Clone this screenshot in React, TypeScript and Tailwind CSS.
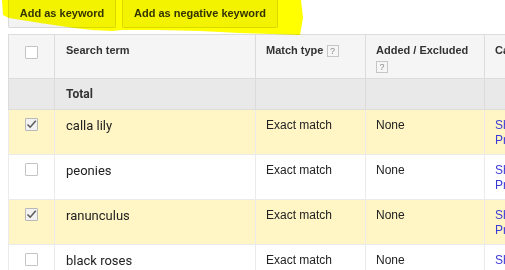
import React from 'react';

const rows = [
  { term: 'calla lily', checked: true },
  { term: 'peonies', checked: false },
  { term: 'ranunculus', checked: true },
  { term: 'black roses', checked: false },
];

const Help = () => (
  <span className="inline-flex items-center justify-center w-[12px] h-[12px] border border-[#c6c6c6] bg-[#f6f6f6] text-[9px] leading-none text-[#8a8a8a] font-normal align-middle">?</span>
);

const Box = ({ checked }: { checked: boolean }) => (
  <span className={`block w-[13px] h-[13px] rounded-[1px] border ${checked ? 'border-[#b8b8b8] bg-[#f2f2f2]' : 'border-[#c4c4c4] bg-white'}`}>
    {checked && (
      <svg viewBox="0 0 13 13" className="w-[13px] h-[13px] -mt-px -ml-px">
        <path d="M2.5 6.5 L5.2 9.2 L10.8 2.8" fill="none" stroke="#5c5c5c" strokeWidth="1.6" />
      </svg>
    )}
  </span>
);

export default function App() {
  return (
    <div className="relative w-[505px] h-[270px] overflow-hidden bg-white font-['Liberation_Sans',Arial,sans-serif]">
      {/* toolbar */}
      <div className="flex gap-[6px] pl-[8px]">
        <button className="h-[28px] w-[108px] border border-t-0 border-[#d9d9d9] bg-[#f3f3f3] rounded-b-[2px] text-[11px] font-bold text-[#333]">Add as keyword</button>
        <button className="h-[28px] w-[156px] border border-t-0 border-[#d9d9d9] bg-[#f3f3f3] rounded-b-[2px] text-[11px] font-bold text-[#333]">Add as negative keyword</button>
      </div>

      {/* highlighter stroke */}
      <svg className="absolute left-0 top-0 mix-blend-multiply pointer-events-none" width="310" height="40">
        <path
          d="M2 0 L301 0 L303 18 L300 35 L272 34 L240 33 L200 31 L160 30 L122 30 L112 31 L92 30 L74 28 L40 23 L9 18 L3 15 Z"
          fill="#ffff00"
        />
      </svg>

      {/* table */}
      <div className="mt-[6px] ml-[8px] overflow-hidden">
        <table className="border-collapse table-fixed w-[600px] text-[12px] text-[#222]">
          <colgroup>
            <col className="w-[46px]" />
            <col className="w-[201px]" />
            <col className="w-[110px]" />
            <col className="w-[119px]" />
            <col className="w-[124px]" />
          </colgroup>
          <thead>
            <tr className="h-[44px] bg-[#f5f5f5] align-top text-[11px] font-bold text-[#333] leading-[14px]">
              <th className="border border-[#dcdcdc] pt-[11px]">
                <div className="flex justify-center"><Box checked={false} /></div>
              </th>
              <th className="border border-[#dcdcdc] pt-[8px] pl-[11px] text-left">Search term</th>
              <th className="border border-[#dcdcdc] pt-[8px] pl-[10px] text-left">
                Match type <Help />
              </th>
              <th className="border border-[#dcdcdc] pt-[8px] pl-[10px] text-left">
                Added / Excluded
                <div className="mt-[2px]"><Help /></div>
              </th>
              <th className="border border-[#dcdcdc] pt-[8px] pl-[10px] text-left whitespace-nowrap overflow-hidden">Campaign</th>
            </tr>
          </thead>
          <tbody>
            <tr className="h-[31px] bg-[#e9e9e9] font-['Roboto',sans-serif] font-bold text-[12px] text-[#333]">
              <td className="border border-[#dcdcdc]" />
              <td className="border border-[#dcdcdc] pl-[11px]">Total</td>
              <td className="border border-[#dcdcdc]" />
              <td className="border border-[#dcdcdc]" />
              <td className="border border-[#dcdcdc]" />
            </tr>
            {rows.map((r) => (
              <tr key={r.term} className={`h-[45px] align-top leading-[15px] ${r.checked ? 'bg-[#fff5c5]' : 'bg-white'}`}>
                <td className="border border-[#ebebeb] pt-[8px]">
                  <div className="flex justify-center"><Box checked={r.checked} /></div>
                </td>
                <td className="border border-[#ebebeb] pt-[8px] pl-[11px] font-['Roboto',sans-serif] text-[13px] text-[#222]">{r.term}</td>
                <td className="border border-[#ebebeb] pt-[8px] pl-[10px]">Exact match</td>
                <td className="border border-[#ebebeb] pt-[8px] pl-[10px]">None</td>
                <td className="border border-[#ebebeb] pt-[8px] pl-[10px] text-[#3b3bd6] whitespace-nowrap overflow-hidden">
                  <div>Shopping campaign</div>
                  <div>Product group</div>
                </td>
              </tr>
            ))}
          </tbody>
        </table>
      </div>
    </div>
  );
}
